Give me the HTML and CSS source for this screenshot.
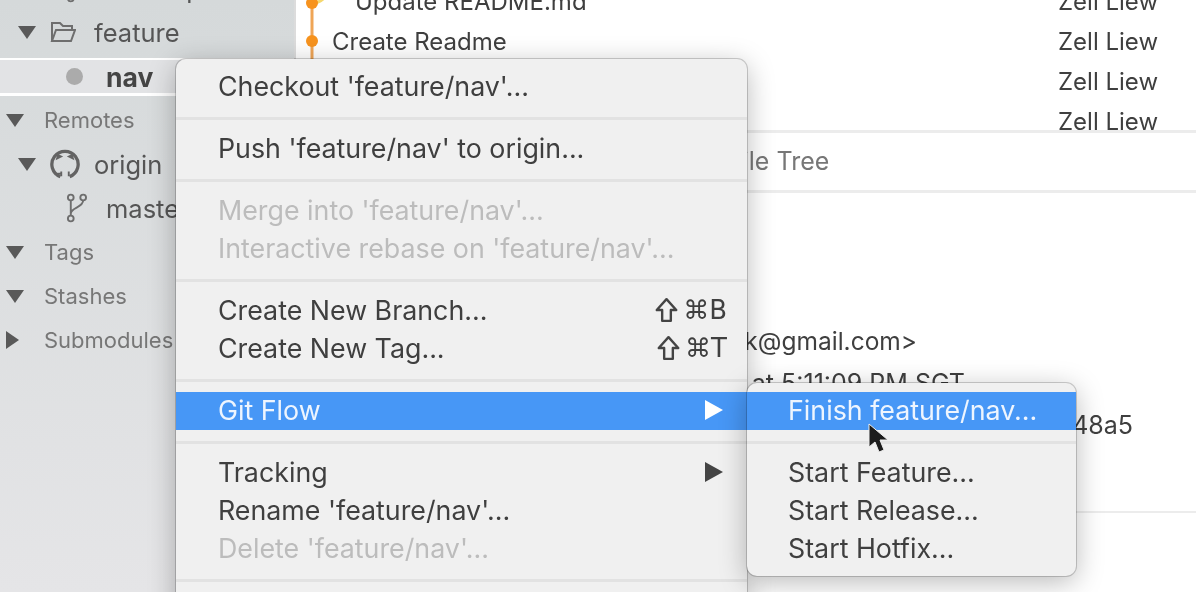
FILE: index.html
```html
<!DOCTYPE html>
<html lang="en">
<head>
    <meta charset="UTF-8">
    <meta name="viewport" content="width=device-width, initial-scale=1.0">
    <title>Sourcetree Git Flow menu</title>
    <link rel="stylesheet" href="styles.css">
</head>
<body>

<div class="app">
    <aside class="sidebar">
        <div class="tree-row depth-2 cut-row">
            <svg class="branch-icon" viewBox="0 0 22 32"><circle cx="5" cy="5" r="3"/><circle cx="18" cy="5" r="3"/><circle cx="5" cy="27" r="3"/><path d="M5 8v16M18 8c0 8-13 7-13 14"/></svg>
            <span>develop</span>
        </div>
        <div class="tree-row depth-1">
            <span class="caret"></span>
            <svg class="folder-icon" viewBox="0 0 26 22"><path d="M2 20V2h8l3 3h9v4M2 20h19l4-11H6L2 20z"/></svg>
            <span>feature</span>
        </div>
        <div class="tree-row depth-2 selected">
            <span class="dot"></span>
            <span class="bold">nav</span>
        </div>
        <div class="tree-row depth-0 section">
            <span class="caret"></span>
            <span>Remotes</span>
        </div>
        <div class="tree-row depth-1">
            <span class="caret"></span>
            <svg class="github-icon" viewBox="0 0 32 32"><path class="ring" d="M11 29.5A14 14 0 1 1 21 29.5"/><path class="ring-legs" d="M12 29v-5M20 29v-5M5 27c2 0 3-1 7-1"/><path class="ears" d="M6 12l2-7 6 3zM26 12l-2-7-6 3z"/></svg>
            <span>origin</span>
        </div>
        <div class="tree-row depth-2">
            <svg class="branch-icon" viewBox="0 0 22 32"><circle cx="5" cy="5" r="3"/><circle cx="18" cy="5" r="3"/><circle cx="5" cy="27" r="3"/><path d="M5 8v16M18 8c0 8-13 7-13 14"/></svg>
            <span>master</span>
        </div>
        <div class="tree-row depth-0 section">
            <span class="caret"></span>
            <span>Tags</span>
        </div>
        <div class="tree-row depth-0 section">
            <span class="caret"></span>
            <span>Stashes</span>
        </div>
        <div class="tree-row depth-0 section">
            <span class="caret closed"></span>
            <span>Submodules</span>
        </div>
    </aside>

    <main class="main">
        <div class="commits">
            <div class="commit">
                <svg class="graph" viewBox="0 0 36 40"><path class="graph-line" d="M16 21v19"/><path class="graph-branch" d="M16 21c10 0 18-8 18-21"/><circle class="graph-dot" cx="16" cy="21" r="6"/></svg>
                <span class="message indented">Update README.md</span>
                <span class="author">Zell Liew</span>
            </div>
            <div class="commit">
                <svg class="graph" viewBox="0 0 36 40"><path class="graph-line" d="M16 0v40"/><circle class="graph-dot" cx="16" cy="19" r="6"/></svg>
                <span class="message">Create Readme</span>
                <span class="author">Zell Liew</span>
            </div>
            <div class="commit">
                <svg class="graph" viewBox="0 0 36 40"><path class="graph-line" d="M16 0v40"/></svg>
                <span class="message"></span>
                <span class="author">Zell Liew</span>
            </div>
            <div class="commit">
                <svg class="graph" viewBox="0 0 36 40"><path class="graph-line" d="M16 0v40"/></svg>
                <span class="message"></span>
                <span class="author">Zell Liew</span>
            </div>
        </div>

        <div class="tabs">File Tree</div>

        <div class="details">
            <div class="detail-line email">zellwk@gmail.com&gt;</div>
            <div class="detail-line date">at 5:11:09 PM SGT</div>
            <div class="detail-line hash">48a5</div>
        </div>
    </main>

    <div class="menu context-menu">
        <div class="item">Checkout 'feature/nav'...</div>
        <div class="sep"></div>
        <div class="item">Push 'feature/nav' to origin...</div>
        <div class="sep"></div>
        <div class="item disabled">Merge into 'feature/nav'...</div>
        <div class="item disabled">Interactive rebase on 'feature/nav'...</div>
        <div class="sep"></div>
        <div class="item">Create New Branch...
            <span class="shortcut"><svg class="shift-icon" viewBox="0 0 22 24"><path d="M11 2L2 12h5v10h8V12h5z"/></svg>⌘B</span>
        </div>
        <div class="item">Create New Tag...
            <span class="shortcut"><svg class="shift-icon" viewBox="0 0 22 24"><path d="M11 2L2 12h5v10h8V12h5z"/></svg>⌘T</span>
        </div>
        <div class="sep"></div>
        <div class="item active">Git Flow<span class="arrow"></span></div>
        <div class="sep"></div>
        <div class="item">Tracking<span class="arrow"></span></div>
        <div class="item">Rename 'feature/nav'...</div>
        <div class="item disabled">Delete 'feature/nav'...</div>
        <div class="sep"></div>
    </div>

    <div class="menu submenu">
        <div class="item active">Finish feature/nav...</div>
        <div class="sep"></div>
        <div class="item">Start Feature...</div>
        <div class="item">Start Release...</div>
        <div class="item">Start Hotfix...</div>
    </div>

    <svg class="pointer" viewBox="0 0 22 32"><path d="M2 1v23l6-5 4 10 5-2-4-10h8z"/></svg>
</div>

</body>
</html>
```

FILE: styles.css
```css
body {
    margin: 0;
    background: white;
    overflow: hidden;
}
.app {
    position: relative;
    display: flex;
    width: 1196px;
    height: 592px;
    overflow: hidden;
    font-family: Inter, "Liberation Sans", sans-serif;
    font-size: 24px;
    color: #3f3f3f;
    filter: blur(0.7px);
}

/* sidebar */
.sidebar {
    width: 294px;
    height: 592px;
    flex-shrink: 0;
    background: linear-gradient(#d5d9da, #e5e5e7);
    border-right: 2px solid #dcdcdc;
    overflow: hidden;
}
.tree-row {
    display: flex;
    align-items: center;
    box-sizing: border-box;
    height: 44px;
    padding-bottom: 2px;
    font-size: 25.5px;
    color: #555;
    white-space: nowrap;
}
.cut-row {
    margin-top: -33px;
}
.depth-0 {
    padding-left: 6px;
}
.depth-1 {
    padding-left: 18px;
}
.depth-2 {
    padding-left: 66px;
}
.section {
    font-size: 22px;
    color: #777;
}
.selected {
    height: 38px;
    margin: 3px 0;
    padding-bottom: 0;
    background: #e2e3e5;
    border-top: 2px solid white;
    border-bottom: 3px solid white;
}
.bold {
    font-size: 26.5px;
    font-weight: 700;
    color: #444;
}
.caret {
    width: 0;
    height: 0;
    border-left: 9px solid transparent;
    border-right: 9px solid transparent;
    border-top: 13px solid #595959;
    margin-right: 20px;
}
.depth-1 .caret {
    margin-right: 14px;
}
.caret.closed {
    border-top: 9px solid transparent;
    border-bottom: 9px solid transparent;
    border-left: 13px solid #595959;
    border-right: none;
    margin-right: 25px;
}
.dot {
    width: 17px;
    height: 17px;
    border-radius: 50%;
    background: #ababab;
    margin-right: 23px;
}
.branch-icon {
    width: 21px;
    height: 32px;
    margin-right: 19px;
    fill: none;
    stroke: #6e6e6e;
    stroke-width: 2;
}
.folder-icon {
    width: 26px;
    height: 22px;
    margin-right: 18px;
    fill: none;
    stroke: #6e6e6e;
    stroke-width: 2;
}
.github-icon {
    width: 30px;
    height: 30px;
    margin-right: 14px;
    fill: none;
    stroke: #636363;
}
.github-icon .ring {
    stroke-width: 3.5;
}
.github-icon .ring-legs {
    stroke-width: 2;
}
.github-icon .ears {
    fill: #636363;
    stroke: none;
}

/* commit list */
.main {
    flex: 1;
    min-width: 0;
    background: white;
}
.commits {
    height: 130px;
    overflow: hidden;
}
.commit {
    display: flex;
    align-items: center;
    box-sizing: border-box;
    height: 40px;
    padding-bottom: 2px;
    white-space: nowrap;
}
.commit:first-child {
    margin-top: -18px;
}
.graph {
    align-self: flex-start;
    width: 36px;
    height: 40px;
    flex-shrink: 0;
}
.graph-line {
    stroke: #efa556;
    stroke-width: 3;
    fill: none;
}
.graph-branch {
    stroke: #f5d76e;
    stroke-width: 3;
    fill: none;
}
.graph-dot {
    fill: #f7931e;
}
.message {
    width: 726px;
    flex-shrink: 0;
}
.indented {
    padding-left: 23px;
    box-sizing: border-box;
}
.tabs {
    height: 57px;
    line-height: 57px;
    padding-left: 432px;
    border-top: 3px solid #ececec;
    border-bottom: 3px solid #ececec;
    font-size: 25px;
    color: #777;
}
.details {
    padding-top: 127px;
    height: 320px;
    box-sizing: border-box;
    border-bottom: 2px solid #ececec;
    font-size: 25px;
}
.detail-line {
    height: 42px;
    line-height: 42px;
    text-align: right;
}
.email {
    width: 621px;
    font-size: 24.5px;
}
.date {
    width: 669px;
}
.hash {
    width: 837px;
}

/* menus */
.menu {
    position: absolute;
    box-sizing: border-box;
    padding-top: 9px;
    background: #f0f0f0;
    border-radius: 10px;
    box-shadow: 0 0 0 1px rgba(0, 0, 0, 0.18), 0 6px 28px rgba(0, 0, 0, 0.28);
    font-size: 26.8px;
}
.context-menu {
    left: 176px;
    top: 59px;
    width: 571px;
    height: 560px;
}
.submenu {
    left: 747px;
    top: 383px;
    width: 329px;
    height: 193px;
}
.item {
    display: flex;
    align-items: center;
    justify-content: space-between;
    box-sizing: border-box;
    height: 38px;
    padding: 0 20px 2px 42px;
    white-space: nowrap;
}
.sep {
    height: 24px;
    display: flex;
    align-items: center;
}
.sep::after {
    content: "";
    flex: 1;
    height: 3px;
    background: #e2e2e2;
}
.disabled {
    color: #bcbcbc;
}
.active {
    background: #4797f6;
    color: #eef5fe;
}
.shortcut {
    display: flex;
    align-items: center;
    gap: 2px;
    font-family: "DejaVu Sans", sans-serif;
    font-size: 26px;
}
.shift-icon {
    width: 25px;
    height: 26px;
    margin-right: 2px;
    fill: none;
    stroke: #444;
    stroke-width: 2.2;
    stroke-linejoin: round;
}
.arrow {
    width: 0;
    height: 0;
    border-top: 10px solid transparent;
    border-bottom: 10px solid transparent;
    border-left: 18px solid #444;
    margin-right: 4px;
}
.active .arrow {
    border-left-color: white;
}
.submenu .item {
    padding-left: 41px;
}

.pointer {
    position: absolute;
    left: 867px;
    top: 423px;
    width: 22px;
    height: 32px;
    fill: #1c1c1c;
    stroke: #eee;
    stroke-width: 1;
}
```
